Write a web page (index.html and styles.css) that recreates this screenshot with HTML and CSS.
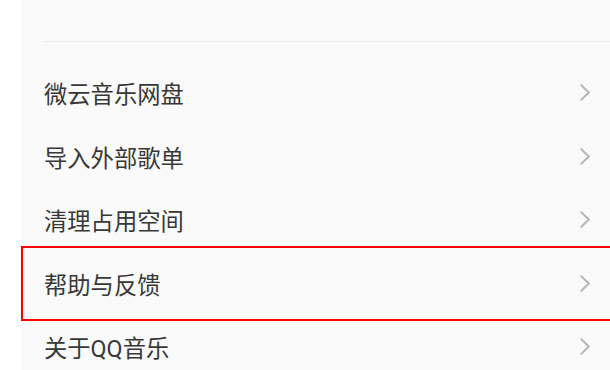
FILE: index.html
```html
<!DOCTYPE html>
<html lang="zh-CN">
<head>
<meta charset="utf-8">
<link rel="stylesheet" href="styles.css">
</head>
<body>
<div class="panel">
  <div class="top"></div>
  <ul class="menu">
    <li class="item"><span class="label">微云音乐网盘</span><svg class="chev" viewBox="0 0 10 17"><polyline points="1.2,1.2 8.8,8.5 1.2,15.8"/></svg></li>
    <li class="item"><span class="label">导入外部歌单</span><svg class="chev" viewBox="0 0 10 17"><polyline points="1.2,1.2 8.8,8.5 1.2,15.8"/></svg></li>
    <li class="item"><span class="label">清理占用空间</span><svg class="chev" viewBox="0 0 10 17"><polyline points="1.2,1.2 8.8,8.5 1.2,15.8"/></svg></li>
    <li class="item highlighted"><span class="label">帮助与反馈</span><svg class="chev" viewBox="0 0 10 17"><polyline points="1.2,1.2 8.8,8.5 1.2,15.8"/></svg></li>
    <li class="item"><span class="label">关于QQ音乐</span><svg class="chev" viewBox="0 0 10 17"><polyline points="1.2,1.2 8.8,8.5 1.2,15.8"/></svg></li>
  </ul>
</div>
</body>
</html>
```

FILE: styles.css
```css
html, body {
  margin: 0;
  padding: 0;
  background: #ffffff;
  overflow: hidden;
}
body {
  width: 610px;
  height: 370px;
  font-family: Roboto, "Noto Sans CJK SC", "Noto Sans", sans-serif;
}
.panel {
  margin-left: 21px;
  height: 370px;
  background: #fafafa;
}
.top {
  height: 41px;
  margin-left: 22px;
  border-bottom: 1px solid #eeeeee;
}
.menu {
  list-style: none;
  margin: 0;
  padding: 21.25px 0 0 0;
}
.item {
  position: relative;
  height: 63.5px;
  display: flex;
  align-items: center;
  justify-content: space-between;
  padding-left: 23px;
  padding-right: 20px;
}
.label {
  font-size: 23.3px;
  color: #383838;
  line-height: 1;
  margin-bottom: -2px;
}
.chev {
  width: 10px;
  height: 17px;
  margin-bottom: 5px;
  fill: none;
  stroke: #b3b3b3;
  stroke-width: 1.8;
  stroke-linecap: round;
  stroke-linejoin: round;
}
.highlighted::after {
  content: "";
  position: absolute;
  left: 0;
  right: -10px;
  top: -7.5px;
  bottom: -3.5px;
  border: 2.5px solid #ff0000;
  pointer-events: none;
}
```
